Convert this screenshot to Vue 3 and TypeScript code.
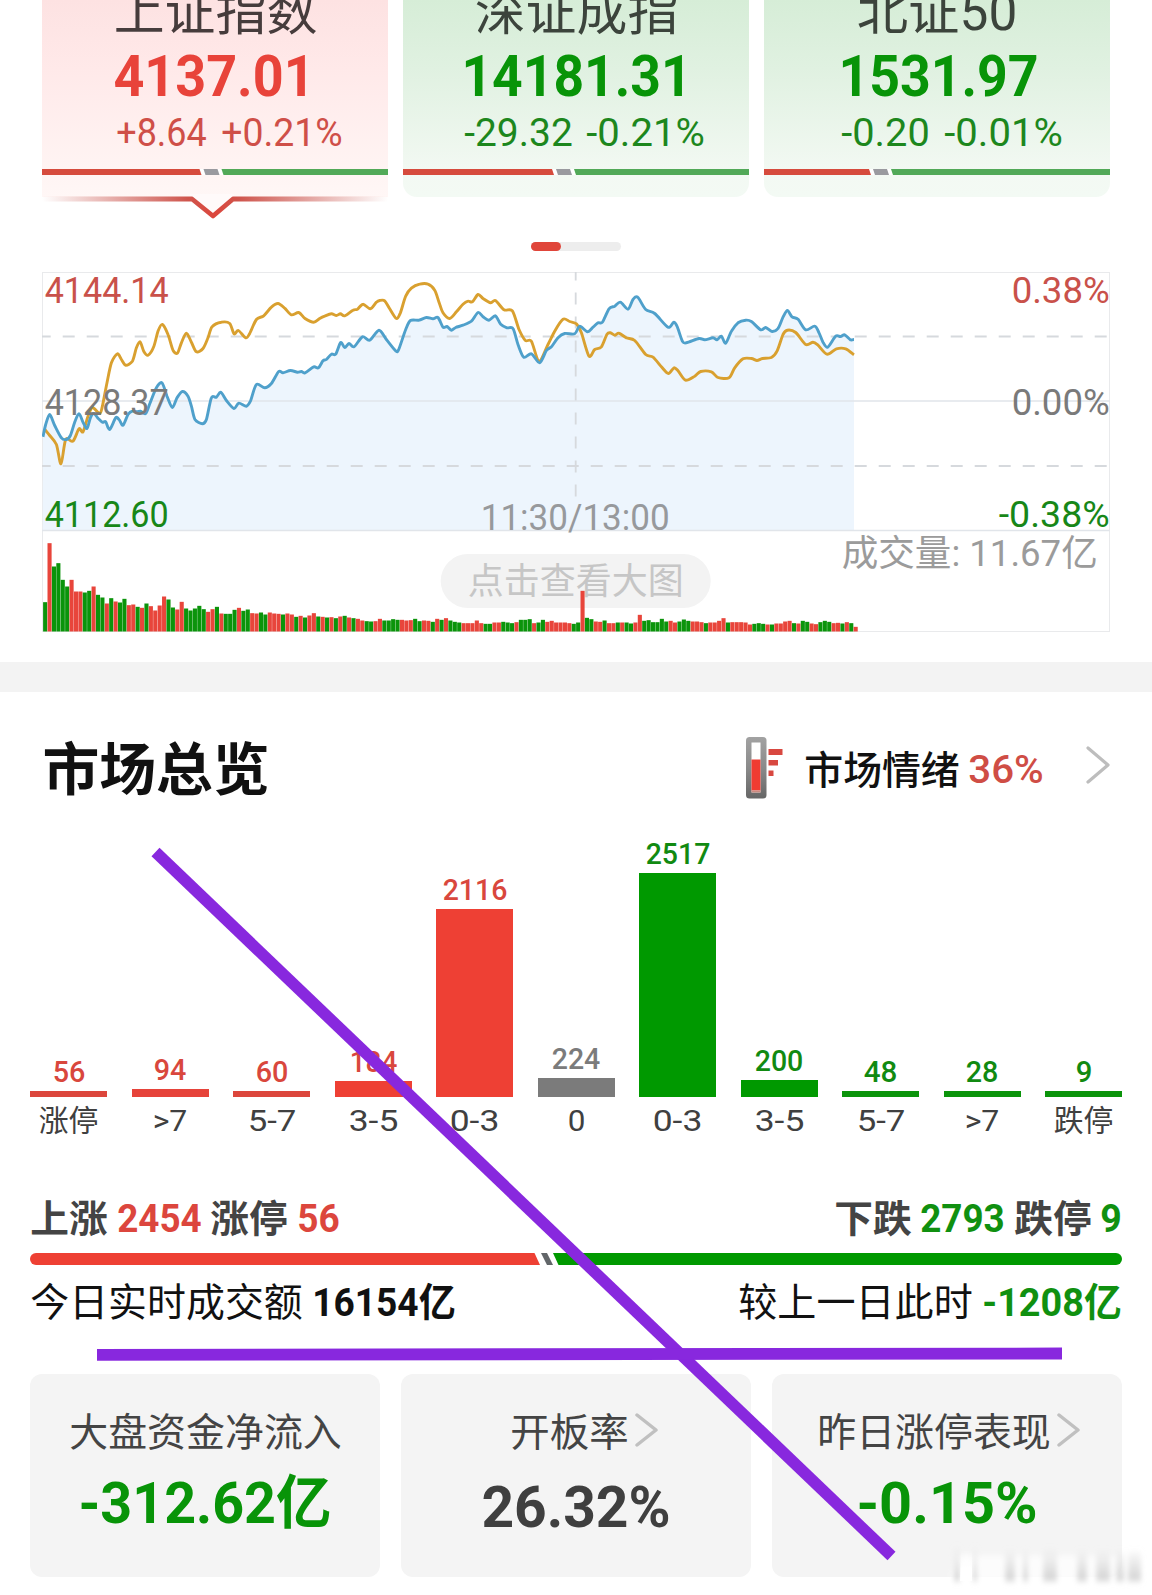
<script setup lang="ts">
import { h } from 'vue'

const RED = '#ee4034'
const GREEN = '#009900'

interface FitProps {
  t: string
  w: number
  s: number
  c?: string
  b?: number
}

// Text set to an exact ink width; the box's bottom edge is the text baseline.
const Fit = (p: FitProps) => {
  const height = +(p.s * 0.711).toFixed(2)
  return h('svg', { class: 'fit', width: p.w, height, style: 'display:block;flex:none;overflow:visible' }, [
    h(
      'text',
      {
        x: -p.s * 0.045,
        y: height,
        textLength: p.w + p.s * 0.09,
        lengthAdjust: 'spacingAndGlyphs',
        'font-size': p.s,
        'font-weight': p.b ?? 400,
        fill: p.c ?? '#404040',
      },
      p.t,
    ),
  ])
}
Fit.props = ['t', 'w', 's', 'c', 'b']

const indices = [
  { name: '上证指数', nameW: 199, price: '4137.01', priceW: 196, pad: 74, chg: '+8.64', chgW: 87, pct: '+0.21%', pctW: 118, gap: 18, up: true, red: 158.5 },
  { name: '深证成指', nameW: 199, price: '14181.31', priceW: 225, pad: 61, chg: '-29.32', chgW: 105, pct: '-0.21%', pctW: 115, gap: 17, up: false, red: 150 },
  { name: '北证50', nameW: 156, price: '1531.97', priceW: 195, pad: 77, chg: '-0.20', chgW: 85, pct: '-0.01%', pctW: 115, gap: 18, up: false, red: 106 },
]

// Line samples in thirds of a pixel, split over three windows of the trading day.
type Run = [number, number[]]
const blueRuns: Run[] = [
  [-36, [40,532,48,495,60,465,75,498,95,535,110,540,122,528,135,488,148,463,160,488,172,507,182,475,192,462,205,476,218,488,228,487,240,510,258,475,268,480,280,497,295,465,308,455,322,457,333,455,348,462,362,428,380,385,397,370,412,410,428,444,442,415,458,396,475,410,485,440,496,480,518,493,530,480,545,415,560,413,573,398,590,423,613,447,627,431,650,440,662,425,680,375,705,385,725,372,747,336,760,340,782,333,803,338,815,336,826,340,852,322,866,325]],
  [834, [10,304,20,300,35,284,48,284,63,249,75,264,88,252,103,262,128,232,150,242,178,212,200,240,228,274,237,270,258,210,272,183,298,182,320,174,340,178,355,174,370,203,382,201,395,212,408,204,430,197,455,185,475,159,490,172,508,182,527,169,543,194,562,205,580,207,595,255,612,293,635,283,660,310,680,273,695,262,715,235,735,222,765,223,780,200,803,217,820,203,835,190]],
  [1674, [8,188,28,148,45,140,62,128,85,149,100,120,114,113,138,150,165,162,205,203,222,188,232,200,248,245,260,250,298,237,315,241,340,235,352,241,365,230,378,251,395,215,415,190,438,182,455,186,483,211,498,204,517,216,535,207,550,173,563,153,577,172,595,179,618,211,645,200,658,220,670,248,684,263,708,230,722,231,735,226,752,241,763,240]],
]
const goldRuns: Run[] = [
  [-36, [44,508,60,528,80,555,94,613,108,540,130,545,148,508,160,517,175,470,188,444,210,462,218,440,232,370,245,310,263,283,275,300,288,317,308,305,320,265,331,247,342,275,355,287,372,262,385,215,398,195,415,225,430,272,443,281,455,250,470,221,485,248,500,277,520,267,535,235,547,202,575,188,600,192,613,223,626,213,648,235,660,222,680,180,702,169,725,143,745,132,765,146,785,166,807,159,826,177,852,188,870,177]],
  [834, [15,170,35,163,50,168,62,163,75,169,100,152,113,149,130,134,152,148,170,128,180,123,195,124,210,148,230,177,242,160,258,110,275,86,300,74,325,74,345,92,358,128,370,160,390,177,410,157,430,134,445,125,458,127,475,105,490,117,513,130,527,123,553,151,578,154,598,210,617,243,635,245,658,305,685,255,705,215,730,179,750,186,770,193,785,220,808,290,825,270]],
  [1674, [5,262,22,224,32,220,45,227,58,221,80,235,105,243,138,285,160,293,185,322,206,342,223,325,235,334,257,362,285,350,303,336,335,337,355,354,388,355,405,325,430,298,455,297,472,303,488,297,515,294,532,275,550,225,563,212,588,219,618,255,640,248,655,257,682,284,710,268,738,268,763,286]],
]

function smooth(runs: Run[]): string {
  const pts: [number, number][] = []
  for (const [dx, a] of runs) {
    for (let i = 0; i < a.length; i += 2) pts.push([(a[i] + dx) / 3, (a[i + 1] - 36) / 3])
  }
  let d = `M${pts[0][0].toFixed(1)} ${pts[0][1].toFixed(1)}`
  for (let i = 0; i < pts.length - 1; i++) {
    const p0 = pts[Math.max(0, i - 1)]
    const p1 = pts[i]
    const p2 = pts[i + 1]
    const p3 = pts[Math.min(pts.length - 1, i + 2)]
    const k = 7
    d += `C${(p1[0] + (p2[0] - p0[0]) / k).toFixed(1)} ${(p1[1] + (p2[1] - p0[1]) / k).toFixed(1)} ${(p2[0] - (p3[0] - p1[0]) / k).toFixed(1)} ${(p2[1] - (p3[1] - p1[1]) / k).toFixed(1)} ${p2[0].toFixed(1)} ${p2[1].toFixed(1)}`
  }
  return d
}
const bluePath = smooth(blueRuns)
const goldPath = smooth(goldRuns)
const areaPath = `${bluePath}L812.3 259L1 259Z`

const volumes = (
  'g88 r265 g195 g205 g155 g135 r155 r120 r120 g117 g122 r135 g110 g102 r84 g100 r90 g87 g98 r79 r81 g74 r71 g84 r76 r63 r78 r105 g96 g72 r66 r89 g69 g63 g69 g77 g67 r59 r67 g74 r54 g53 g53 g65 r71 g62 g66 r55 r54 g57 g51 r57 r54 r53 g51 r54 r51 g44 r47 g42 r48 r55 g45 r44 g42 ' +
  'r43 g40 r45 g47 r42 g40 r38 r33 g31 g30 r31 r38 g33 g33 g37 g35 r35 r33 r34 g38 g31 r33 r32 g29 r38 g35 r40 g33 g29 g27 r25 r25 r25 r33 r25 g23 g23 r27 r27 g29 g27 g25 r28 g35 g35 g37 r25 g27 g35 r29 r32 r27 r27 r27 r25 g23 g27 r122 g41 g37 r30 r29 ' +
  'g33 r25 r25 g27 r27 g27 g24 r27 r50 g32 g34 g28 g28 g38 g30 r32 r27 g30 g36 g32 r30 r30 r28 g25 r27 r27 r32 r40 g27 r28 r28 r28 r27 r21 g23 g25 g23 r21 g21 r24 r24 r30 r32 g25 r24 g32 g29 r24 r22 g28 g32 g29 r25 r26 g24 r28 g25 r14'
)
  .split(' ')
  .map((v, i) => ({ x: 1.4 + i * 4.405, hgt: +v.slice(1) / 3, color: v[0] === 'r' ? '#e8453b' : '#0b940b' }))

const R = '#d9473d'
const G = '#118a11'
const dist = [
  { n: '56', nw: 30, l: '涨停', lw: 57, h: 6, fill: '#dc463c', c: R },
  { n: '94', nw: 30, l: '>7', lw: 32, h: 8, fill: '#e6433a', c: R },
  { n: '60', nw: 30, l: '5-7', lw: 46, h: 6, fill: '#dc463c', c: R },
  { n: '184', nw: 45, l: '3-5', lw: 47, h: 16, fill: RED, c: R },
  { n: '2116', nw: 62, l: '0-3', lw: 47, h: 188, fill: RED, c: R },
  { n: '224', nw: 46, l: '0', lw: 15, h: 19, fill: '#7b7b7b', c: '#7b7b7b' },
  { n: '2517', nw: 62, l: '0-3', lw: 47, h: 224, fill: GREEN, c: G },
  { n: '200', nw: 46, l: '3-5', lw: 47, h: 17, fill: GREEN, c: G },
  { n: '48', nw: 31, l: '5-7', lw: 46, h: 6, fill: '#0b940b', c: G },
  { n: '28', nw: 30, l: '>7', lw: 32, h: 6, fill: '#0b940b', c: G },
  { n: '9', nw: 14, l: '跌停', lw: 57, h: 6, fill: '#0b940b', c: G },
]
</script>

<template>
  <main class="page">
    <section class="indices">
      <article v-for="q in indices" :key="q.name" class="index" :class="q.up ? 'up' : 'down'">
        <div class="row name"><Fit :t="q.name" :w="q.nameW" :s="51" :c="q.up ? '#463c3c' : '#3c443c'" /></div>
        <div class="row price" :style="{ paddingLeft: q.pad + 'px' }">
          <Fit :t="q.price" :w="q.priceW" :s="58" :b="700" :c="q.up ? '#e8433a' : '#089408'" />
        </div>
        <div class="row change" :style="{ paddingLeft: q.pad + 2 + 'px', gap: q.gap + 'px' }">
          <Fit :t="q.chg" :w="q.chgW" :s="39" :c="q.up ? '#cf4f48' : '#1d871d'" />
          <Fit :t="q.pct" :w="q.pctW" :s="39" :c="q.up ? '#cf4f48' : '#1d871d'" />
        </div>
        <svg class="ratio" width="346" height="6" viewBox="0 0 346 6">
          <path d="M0 0H346V6H0Z" fill="#fff" />
          <path :d="`M0 0H${q.red - 1}L${q.red + 1} 6H0Z`" fill="#d64b3d" />
          <path :d="`M${q.red + 3} 0h14l2 6h-14Z`" fill="#9a9a9f" />
          <path :d="`M${q.red + 21} 0H346V6H${q.red + 23}Z`" fill="#52a958" />
        </svg>
        <svg v-if="q.up" class="pointer" width="346" height="26" viewBox="0 0 346 26">
          <defs>
            <linearGradient id="fade" gradientUnits="userSpaceOnUse" x1="0" y1="0" x2="346" y2="0">
              <stop offset="0" stop-color="#c8554e" stop-opacity="0" />
              <stop offset=".42" stop-color="#cf554d" />
              <stop offset=".5" stop-color="#dc463c" />
              <stop offset=".57" stop-color="#cf554d" />
              <stop offset="1" stop-color="#c8554e" stop-opacity="0" />
            </linearGradient>
          </defs>
          <path d="M148 4L171 22L192 4V0H148Z" fill="#fffafa" />
          <path d="M0 5H150L171 22L191 5H346" fill="none" stroke="url(#fade)" stroke-width="4.800" stroke-linejoin="round" />
        </svg>
      </article>
    </section>

    <div class="pager"><i></i></div>

    <section class="trend">
      <svg width="1070" height="362" viewBox="0.300 0.500 1070 362">
        <rect x="0.800" y="1" width="1067" height="359" fill="none" stroke="#e9eaec" stroke-width="1" />
        <path :d="areaPath" fill="#edf5fd" />
        <path d="M0 129.500H1068M0 259H1068" fill="none" stroke="#e1e5ea" stroke-width="1.300" />
        <g fill="none" stroke="#d6d9dd" stroke-width="1.800" stroke-dasharray="12 12">
          <path d="M0 65H1066M0 194.500H1066" stroke-dashoffset="3" />
          <path d="M534 0V236" stroke-dashoffset="3" />
        </g>
        <path :d="goldPath" fill="none" stroke="#d9a02f" stroke-width="2.900" stroke-linejoin="round" />
        <path :d="bluePath" fill="none" stroke="#4fa0cb" stroke-width="2.900" stroke-linejoin="round" />
        <rect x="399" y="282.500" width="270" height="54" rx="27" fill="#f3f3f3" />
        <g font-size="36.500">
          <text x="3" y="31.800" textLength="124" lengthAdjust="spacingAndGlyphs" fill="#c9514a">4144.14</text>
          <text x="3" y="143.800" textLength="124" lengthAdjust="spacingAndGlyphs" fill="#7a7a7a">4128.37</text>
          <text x="3" y="255.800" textLength="124" lengthAdjust="spacingAndGlyphs" fill="#188718">4112.60</text>
          <text x="970" y="31.800" textLength="98" lengthAdjust="spacingAndGlyphs" fill="#c9514a">0.38%</text>
          <text x="970" y="143.800" textLength="98" lengthAdjust="spacingAndGlyphs" fill="#7a7a7a">0.00%</text>
          <text x="957" y="255.800" textLength="111" lengthAdjust="spacingAndGlyphs" fill="#188718">-0.38%</text>
          <text x="439" y="258.800" textLength="189" lengthAdjust="spacingAndGlyphs" fill="#97999c">11:30/13:00</text>
          <text x="800" y="294.500" textLength="256" lengthAdjust="spacingAndGlyphs" fill="#9b9b9b">成交量: 11.67亿</text>
          <text x="426" y="322" textLength="216" lengthAdjust="spacingAndGlyphs" fill="#c6c6c6">点击查看大图</text>
        </g>
        <rect v-for="(v, i) in volumes" :key="i" :x="v.x" :y="360 - v.hgt" width="4.100" :height="v.hgt" :fill="v.color" />
      </svg>
    </section>

    <div class="divider"></div>

    <header class="overview-head">
      <Fit class="title" t="市场总览" :w="222" :s="56.5" :b="700" c="#111" />
      <div class="mood">
        <svg class="thermo" width="37" height="62" viewBox="0 0 37 62">
          <defs>
            <linearGradient id="tube" x1="0" y1="0" x2="0" y2="1">
              <stop offset="0" stop-color="#a2a2a2" />
              <stop offset=".5" stop-color="#8a8a8a" />
              <stop offset="1" stop-color="#666" />
            </linearGradient>
          </defs>
          <rect x="0" y="0" width="20.500" height="61.500" rx="3.500" fill="url(#tube)" />
          <rect x="5.500" y="5.500" width="9" height="50" fill="#fff" />
          <rect x="5.500" y="22.500" width="9" height="31" fill="#f03c32" />
          <rect x="5.500" y="53.500" width="9" height="2" fill="#c98a80" />
          <path d="M22.500 12h14v6h-14zM22.500 23h9.500v5.500h-9.500zM22.500 33.500h5v5.500h-5z" fill="#d84840" />
        </svg>
        <Fit t="市场情绪" :w="152" :s="38.5" :b="500" c="#111" />
        <Fit class="mood-pct" t="36%" :w="72" :s="39" :b="500" c="#cf4d45" />
        <svg class="more" width="24" height="38" viewBox="0 0 24 38">
          <path d="M2 2L22 19L2 36" fill="none" stroke="#bdbdbd" stroke-width="3.200" stroke-linecap="round" stroke-linejoin="round" />
        </svg>
      </div>
    </header>

    <section class="dist">
      <div v-for="(b, i) in dist" :key="i" class="col">
        <Fit :t="b.n" :w="b.nw" :s="29.5" :b="500" :c="b.c" />
        <div class="bar" :style="{ height: b.h + 'px', background: b.fill }"></div>
        <div class="axis"><Fit :t="b.l" :w="b.lw" :s="30" /></div>
      </div>
    </section>

    <section class="breadth">
      <div class="line totals">
        <Fit t="上涨" :w="74" :s="38" :b="700" c="#444" />
        <Fit t="2454" :w="81" :s="39" :b="700" c="#dc463d" />
        <Fit t="涨停" :w="74" :s="38" :b="700" c="#444" />
        <Fit t="56" :w="39" :s="39" :b="700" c="#dc463d" />
        <span class="grow"></span>
        <Fit t="下跌" :w="74" :s="38" :b="700" c="#444" />
        <Fit t="2793" :w="81" :s="39" :b="700" c="#109010" />
        <Fit t="跌停" :w="74" :s="38" :b="700" c="#444" />
        <Fit t="9" :w="18" :s="39" :b="700" c="#109010" />
      </div>
      <svg class="meter" width="1092" height="12" viewBox="0 0 1092 12">
        <path d="M6 0H504.500L510 12H6A6 6 0 0 1 6 0Z" fill="#ee4034" />
        <path d="M511 0H517L523 12H517Z" fill="#626669" />
        <path d="M523 0H1086A6 6 0 0 1 1086 12H528.500Z" fill="#009900" />
      </svg>
      <div class="line amounts">
        <Fit t="今日实时成交额" :w="269" :s="38.5" c="#111" />
        <Fit class="sp" t="16154亿" :w="140" :s="39" :b="700" c="#111" />
        <span class="grow"></span>
        <Fit t="较上一日此时" :w="231" :s="38.5" c="#111" />
        <Fit class="sp" t="-1208亿" :w="136" :s="39" :b="700" c="#109010" />
      </div>
    </section>

    <section class="stats">
      <article class="stat">
        <div class="label"><Fit t="大盘资金净流入" :w="269" :s="38.5" c="#444" /></div>
        <div class="value"><Fit t="-312.62亿" :w="248" :s="57.5" :b="700" c="#089408" /></div>
      </article>
      <article class="stat">
        <div class="label wide">
          <Fit t="开板率" :w="115" :s="38.5" c="#444" />
          <svg class="chev" width="23" height="34" viewBox="0 0 23 34"><path d="M2 2L21 17L2 32" fill="none" stroke="#c0c0c0" stroke-width="3.500" stroke-linecap="round" stroke-linejoin="round" /></svg>
        </div>
        <div class="value low"><Fit t="26.32%" :w="184" :s="58" :b="700" c="#3f3f3f" /></div>
      </article>
      <article class="stat">
        <div class="label nudge">
          <Fit t="昨日涨停表现" :w="230" :s="38.5" c="#444" />
          <svg class="chev" width="23" height="34" viewBox="0 0 23 34"><path d="M2 2L21 17L2 32" fill="none" stroke="#c0c0c0" stroke-width="3.500" stroke-linecap="round" stroke-linejoin="round" /></svg>
        </div>
        <div class="value"><Fit t="-0.15%" :w="176" :s="58" :b="700" c="#089408" /></div>
      </article>
    </section>

    <svg class="marks" width="1152" height="1595" viewBox="0 0 1152 1595">
      <defs>
        <filter id="soft" x="-10%" y="-30%" width="120%" height="160%"><feGaussianBlur stdDeviation="2.500 3" /></filter>
        <linearGradient id="veil" x1="0" y1="0" x2="0" y2="1">
          <stop offset="0" stop-color="#d8d8d8" stop-opacity="0" />
          <stop offset="1" stop-color="#d2d2d2" />
        </linearGradient>
        <linearGradient id="rise" x1="0" y1="0" x2="0" y2="1">
          <stop offset="0" stop-color="#fff" stop-opacity="0" />
          <stop offset=".6" stop-color="#fff" />
        </linearGradient>
      </defs>
      <g filter="url(#soft)">
        <path d="M955 1556H1122V1580H950Z" fill="#fff" opacity=".75" />
        <path d="M954 1546h6v35h-6zM973 1546h4v35h-4zM1005 1552h10v29h-10zM1023 1552h5v29h-5zM1043 1550h14v31h-14zM1077 1552h10v29h-10zM1096 1552h14v29h-14zM1116 1552h8v29h-8zM1128 1552h13v29h-13z" fill="url(#veil)" />
      </g>
      <path d="M961 1550H972V1581H960Z" fill="url(#rise)" />
      <path d="M155.500 852L891.500 1556" stroke="#8828de" stroke-width="11.600" />
      <path d="M97 1354.800L1062 1353.500" stroke="#8828de" stroke-width="11.800" />
    </svg>
  </main>
</template>

<style>
body {
  margin: 0;
  background: #fff;
}
</style>

<style scoped>
.page {
  position: relative;
  width: 1152px;
  height: 1595px;
  overflow: hidden;
  background: #fff;
  font-family: Roboto, 'Noto Sans CJK SC', sans-serif;
}
.indices {
  display: grid;
  grid-template-columns: repeat(3, 346px);
  gap: 15px;
  padding-left: 42px;
  height: 197px;
}
.index {
  position: relative;
  height: 197px;
  border-radius: 0 0 14px 14px;
}
.index.up {
  border-radius: 0;
  background: linear-gradient(#fde2e2, #ffe9e9 35%, #fff7f6);
}
.index.down {
  background: linear-gradient(#d6edd7, #e0f1e1 35%, #f3f9f3 88%, #f3faf4);
}
.row {
  display: flex;
  align-items: flex-end;
}
.name {
  height: 30px;
  justify-content: center;
}
.price {
  height: 66px;
}
.change {
  height: 49.5px;
}
.ratio {
  display: block;
  margin-top: 23.5px;
}
.pointer {
  position: absolute;
  left: 0;
  top: 194px;
}
.pager {
  width: 90px;
  height: 9px;
  margin: 45px auto 0;
  border-radius: 5px;
  background: #ededed;
}
.pager i {
  display: block;
  width: 30px;
  height: 9px;
  border-radius: 5px;
  background: #e0453a;
}
.trend {
  height: 390px;
  margin-top: 21px;
  padding-left: 42px;
}
.trend svg {
  display: block;
}
.divider {
  height: 30px;
  background: #f3f3f3;
}
.overview-head {
  display: flex;
  justify-content: space-between;
  align-items: flex-end;
  height: 96.5px;
  padding: 0 42px 0 45px;
}
.title {
  margin-bottom: -2px;
}
.mood {
  display: flex;
  align-items: flex-end;
}
.thermo {
  margin: 0 23px -10px 0;
}
.mood > .fit {
  margin-bottom: 4px;
}
.mood > .mood-pct {
  margin: 0 44px 5.5px 12px;
}
.more {
  margin-bottom: 4.5px;
}
.dist {
  display: flex;
  justify-content: space-between;
  align-items: flex-end;
  height: 342.5px;
  padding: 0 30px;
}
.col {
  display: flex;
  flex-direction: column;
  align-items: center;
  width: 77px;
}
.bar {
  width: 77px;
  margin-top: 9.3px;
}
.axis {
  display: flex;
  align-items: flex-end;
  height: 34px;
}
.breadth {
  padding: 0 32px 0 32px;
}
.line {
  display: flex;
  align-items: flex-end;
}
.totals {
  height: 101px;
  gap: 12.5px;
}
.grow {
  flex: 1;
}
.meter {
  display: block;
  margin: 21px 0 0 -2px;
}
.amounts {
  height: 51px;
}
.sp {
  margin-left: 13px;
}
.stats {
  display: grid;
  grid-template-columns: repeat(3, 350px);
  gap: 21px;
  margin-top: 58px;
  padding-left: 30px;
}
.stat {
  height: 203px;
  border-radius: 12px;
  background: #f4f4f4;
}
.label {
  display: flex;
  justify-content: center;
  align-items: flex-end;
  gap: 8px;
  height: 72px;
}
.label.wide {
  padding-left: 18px;
}
.label.nudge {
  padding-left: 4px;
}
.chev {
  margin-bottom: -1px;
}
.value {
  display: flex;
  justify-content: center;
  align-items: flex-end;
  height: 77px;
}
.value.low {
  height: 81px;
}
.marks {
  position: absolute;
  left: 0;
  top: 0;
}
</style>
